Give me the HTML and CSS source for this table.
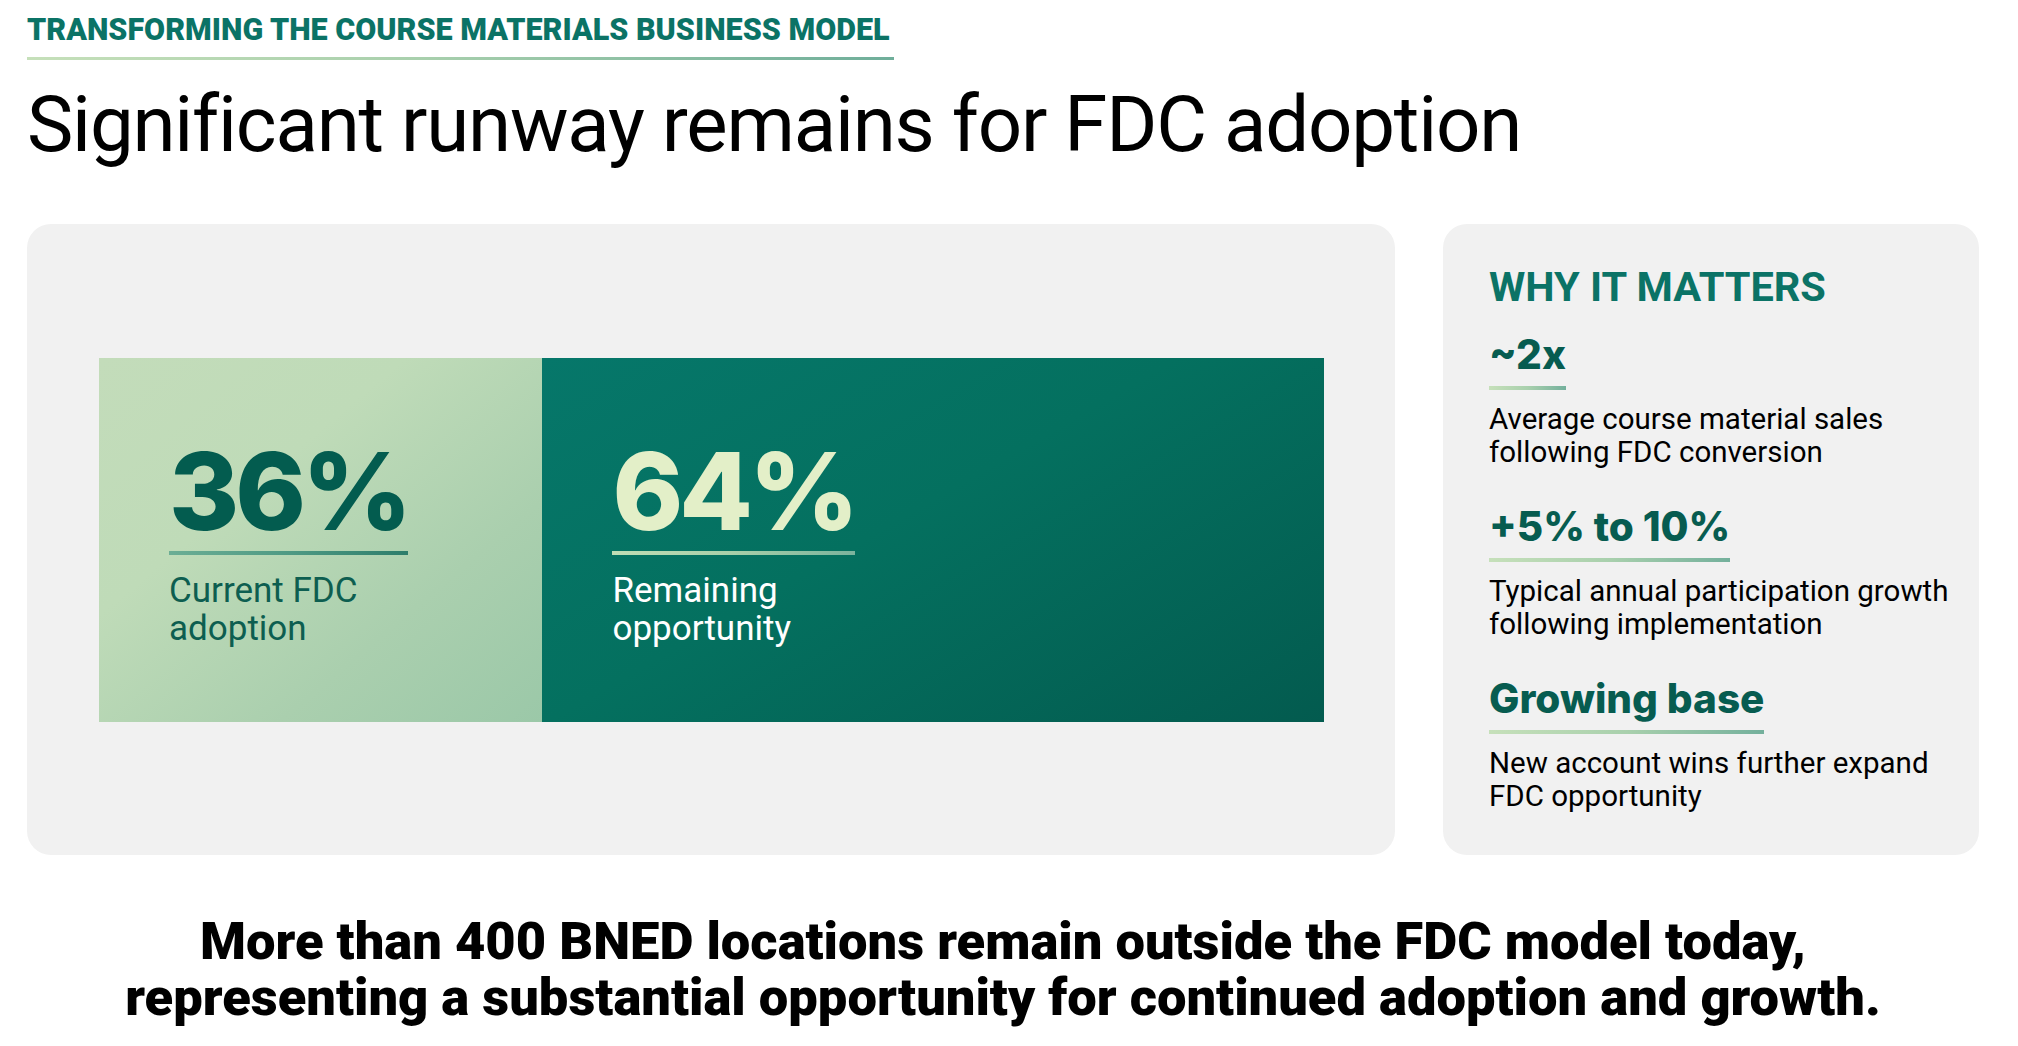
FILE: index.html
```html
<!DOCTYPE html>
<html lang="en">
<head>
<meta charset="utf-8">
<title>Significant runway remains for FDC adoption</title>
<link rel="stylesheet" href="styles.css">
</head>
<body>
<main class="slide">
  <header class="head">
    <div class="eyebrow">TRANSFORMING THE COURSE MATERIALS BUSINESS MODEL</div>
    <h1 class="title">Significant runway remains for FDC adoption</h1>
  </header>

  <section class="content">
    <div class="chart-card">
      <div class="bar">
        <div class="seg seg-light" style="width:36.2%">
          <div class="stat">
            <div class="num num-dark">36%</div>
            <div class="rule rule-dark"></div>
          </div>
          <div class="seg-label label-dark">Current FDC<br>adoption</div>
        </div>
        <div class="seg seg-dark">
          <div class="stat">
            <div class="num num-light">64%</div>
            <div class="rule rule-light"></div>
          </div>
          <div class="seg-label label-light">Remaining<br>opportunity</div>
        </div>
      </div>
    </div>

    <aside class="why-card">
      <h2 class="why-title">WHY IT MATTERS</h2>
      <div class="item">
        <div class="item-stat">
          <div class="item-value">~2x</div>
          <div class="item-rule"></div>
        </div>
        <p class="item-desc">Average course material sales<br>following FDC conversion</p>
      </div>
      <div class="item">
        <div class="item-stat">
          <div class="item-value">+5% to 10%</div>
          <div class="item-rule"></div>
        </div>
        <p class="item-desc">Typical annual participation growth<br>following implementation</p>
      </div>
      <div class="item">
        <div class="item-stat">
          <div class="item-value">Growing base</div>
          <div class="item-rule"></div>
        </div>
        <p class="item-desc">New account wins further expand<br>FDC opportunity</p>
      </div>
    </aside>
  </section>

  <p class="statement">More than 400 BNED locations remain outside the FDC model today,<br>representing a substantial opportunity for continued adoption and growth.</p>
</main>
</body>
</html>
```

FILE: styles.css
```css
* { box-sizing: border-box; }

html, body {
  margin: 0;
  padding: 0;
  background: #ffffff;
}

body {
  font-family: Roboto, "Liberation Sans", Arial, sans-serif;
  color: #000000;
}

.slide {
  width: 2018px;
  height: 1046px;
  padding: 14px 39px 0 27px;
  overflow: hidden;
}

.head {
  display: flex;
  flex-direction: column;
  align-items: flex-start;
}

.eyebrow {
  display: inline-block;
  font-size: 30.5px;
  line-height: 32px;
  font-weight: 900;
  color: #0b7366;
  padding: 0 4px 11px 0;
  border-bottom: 3px solid transparent;
  border-image: linear-gradient(90deg, #c6e0ba 0%, #a9d0ad 45%, #6fae9a 100%) 1;
}

.title {
  margin: 20px 0 0 0;
  font-size: 78px;
  line-height: 90px;
  font-weight: 400;
  color: #000000;
  letter-spacing: -1.2px;
}

.content {
  display: flex;
  gap: 48px;
  margin-top: 54px;
  height: 631px;
}

.chart-card {
  width: 1368px;
  flex: none;
  background: #f1f1f1;
  border-radius: 24px;
  padding: 134px 71px 133px 72px;
}

.bar {
  display: flex;
  height: 364px;
}

.seg {
  padding: 78px 0 0 70px;
  display: flex;
  flex-direction: column;
  align-items: flex-start;
}

.seg-light {
  background: linear-gradient(140deg, #c3dcba 0%, #bfdbb8 35%, #aacfae 70%, #9bc8a8 100%);
}

.seg-dark {
  flex: 1;
  background: linear-gradient(150deg, #06776a 0%, #04705f 45%, #035b4f 100%);
}

.stat {
  display: inline-flex;
  flex-direction: column;
}

.num {
  font-family: Inter, Roboto, "Liberation Sans", sans-serif;
  font-size: 107px;
  line-height: 110px;
  font-weight: 800;
  letter-spacing: -4px;
}

.num-dark { color: #035c4f; }
.num-light { color: #e3efc8; }

.rule {
  height: 4px;
  margin-top: 5px;
  width: 100%;
}

.rule-dark {
  background: linear-gradient(90deg, #6cae95 0%, #4f9a84 50%, #2d7d6b 100%);
}

.rule-light {
  background: linear-gradient(90deg, #c0ddb5 0%, #a8cfa9 50%, #7bb39d 100%);
}

.seg-label {
  margin-top: 17px;
  font-size: 35px;
  line-height: 38px;
  font-weight: 400;
}

.label-dark { color: #0d5e50; }
.label-light { color: #ffffff; }

.why-card {
  flex: 1;
  background: #f1f1f1;
  border-radius: 24px;
  padding: 39px 10px 0 46px;
}

.why-title {
  margin: 0;
  font-size: 41.5px;
  line-height: 48px;
  font-weight: 700;
  color: #0b7366;
}

.item {
  margin-top: 36px;
}

.item:first-of-type {
  margin-top: 22px;
}

.item-stat {
  display: inline-flex;
  flex-direction: column;
}

.item-value {
  font-family: Inter, Roboto, "Liberation Sans", sans-serif;
  font-size: 40.5px;
  line-height: 44px;
  font-weight: 800;
  color: #075c50;
}

.item-rule {
  margin-top: 9px;
  height: 4px;
  width: 100%;
  background: linear-gradient(90deg, #c6e0ba 0%, #a9d0ad 50%, #74b09c 100%);
}

.item-desc {
  margin: 13px 0 0 0;
  font-size: 29.5px;
  line-height: 33px;
  font-weight: 400;
  color: #000000;
}

.statement {
  margin: 58px 0 0 0;
  text-align: center;
  font-size: 52.5px;
  line-height: 56px;
  font-weight: 900;
  color: #000000;
}
```
